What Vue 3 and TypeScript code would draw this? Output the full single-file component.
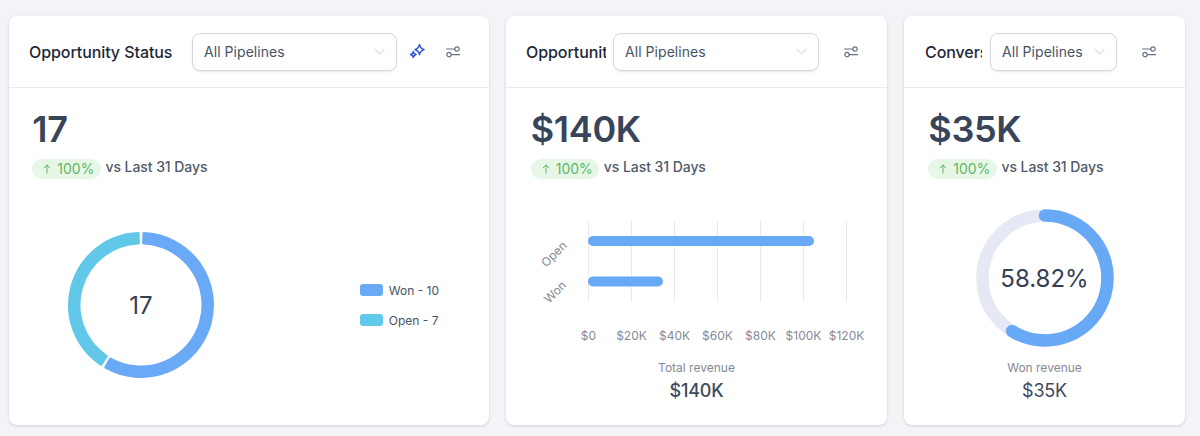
<template>
  <div class="dashboard">
    <section v-for="card in cards" :key="card.id" class="card" :class="card.id">
      <header class="card-header">
        <h3 class="card-title">{{ card.title }}</h3>
        <div class="select">
          <span>All Pipelines</span>
          <svg class="chevron" width="11" height="7" viewBox="0 0 11 7" fill="none">
            <path d="M.8 1.2 5.5 5.8l4.7-4.6" stroke="#c9cdd4" stroke-width="1" stroke-linecap="round" stroke-linejoin="round" />
          </svg>
        </div>
        <button v-if="card.id === 'status'" class="icon-btn sparkle">
          <svg width="18" height="18" viewBox="0 0 18 18" fill="none" stroke="#2f56d3" stroke-width="1.5" stroke-linejoin="round">
            <path d="M10.5 1.6c.6 2.9 1.5 3.9 4.6 5-3.1 1-4 2-4.6 5-.6-3-1.5-4-4.6-5 3.1-1.1 4-2.1 4.6-5Z" />
            <path d="M4.3 8.6c.3 1.7.9 2.3 2.7 2.9-1.8.6-2.4 1.2-2.7 2.9-.3-1.7-.9-2.3-2.7-2.9 1.8-.6 2.4-1.2 2.7-2.9Z" />
          </svg>
        </button>
        <button class="icon-btn">
          <svg width="16" height="14" viewBox="0 0 16 14" fill="none" stroke="#667085" stroke-width="1.2" stroke-linecap="round">
            <path d="M1.4 4h8.2" />
            <circle cx="12" cy="4" r="2.2" />
            <circle cx="4" cy="9.6" r="2.2" />
            <path d="M6.4 9.6h8.2" />
          </svg>
        </button>
      </header>

      <div class="card-body">
        <div class="metric">{{ card.metric }}</div>
        <div class="compare">
          <span class="badge">
            <svg width="8" height="10" viewBox="0 0 8 10" fill="none" stroke="#5cb866" stroke-width="1" stroke-linecap="round" stroke-linejoin="round">
              <path d="M4 9V1M1 4l3-3 3 3" />
            </svg>
            100%
          </span>
          <span class="compare-text">vs Last 31 Days</span>
        </div>

        <!-- donut + legend -->
        <div v-if="card.id === 'status'" class="status-chart">
          <div class="donut">
            <svg width="148" height="148" viewBox="0 0 148 148">
              <path v-for="s in donutSegments" :key="s.name" :d="s.path" :fill="s.color" :stroke="s.color" stroke-width="3" stroke-linejoin="round" />
            </svg>
            <span class="donut-label">17</span>
          </div>
          <ul class="legend">
            <li v-for="s in donutSegments" :key="s.name">
              <i class="swatch" :style="{ background: s.color }"></i>
              <span class="legend-text">{{ s.name }} - {{ s.value }}</span>
            </li>
          </ul>
        </div>

        <!-- horizontal bars -->
        <div v-else-if="card.id === 'value'" class="bar-chart">
          <svg width="381" height="140" viewBox="0 0 381 140">
            <line v-for="(t, i) in ticks" :key="i" :x1="tickX(i)" :x2="tickX(i)" y1="12" y2="93" stroke="#e7e9ee" stroke-width="1" />
            <rect v-for="b in bars" :key="b.name" x="82" :y="b.y" :width="b.width" height="10" rx="5" fill="#68a9f5" />
            <text v-for="b in bars" :key="b.name + 'l'" class="axis-text" text-anchor="middle" :transform="`translate(${b.lx} ${b.ly}) rotate(-45)`">{{ b.name }}</text>
            <text v-for="(t, i) in ticks" :key="t" class="axis-text" :x="tickX(i)" y="131" text-anchor="middle">{{ t }}</text>
          </svg>
        </div>

        <!-- conversion gauge -->
        <div v-else class="gauge">
          <svg width="138" height="138" viewBox="0 0 138 138" fill="none">
            <circle cx="69" cy="69" r="62.5" stroke="#e6e9f5" stroke-width="12.5" />
            <path :d="gaugePath" stroke="#68a9f5" stroke-width="12.5" stroke-linecap="round" />
          </svg>
          <span class="gauge-label">58.82%</span>
        </div>

        <div v-if="card.footLabel" class="foot">
          <div class="foot-label">{{ card.footLabel }}</div>
          <div class="foot-value">{{ card.metric }}</div>
        </div>
      </div>
    </section>
  </div>
</template>

<script setup lang="ts">
interface Card {
  id: string
  title: string
  metric: string
  footLabel?: string
}

const cards: Card[] = [
  { id: 'status', title: 'Opportunity Status', metric: '17' },
  { id: 'value', title: 'Opportunity Value', metric: '$140K', footLabel: 'Total revenue' },
  { id: 'conversion', title: 'Conversion', metric: '$35K', footLabel: 'Won revenue' }
]

const ticks = ['$0', '$20K', '$40K', '$60K', '$80K', '$100K', '$120K']
const tickX = (i: number): number => 82.5 + i * 43

const bars = [
  { name: 'Open', y: 27, width: 226, lx: 51, ly: 48 },
  { name: 'Won', y: 67.5, width: 75, lx: 52, ly: 86 }
]

const point = (r: number, deg: number, c: number): string => {
  const a = (deg * Math.PI) / 180
  return `${(c + r * Math.sin(a)).toFixed(2)} ${(c - r * Math.cos(a)).toFixed(2)}`
}

// ring slice, shrunk a bit since the stroke gives it the rounded corners
const slice = (from: number, to: number): string => {
  const outer = 71.5
  const inner = 62
  const large = to - from > 180 ? 1 : 0
  return `M${point(outer, from, 74)} A${outer} ${outer} 0 ${large} 1 ${point(outer, to, 74)} L${point(inner, to, 74)} A${inner} ${inner} 0 ${large} 0 ${point(inner, from, 74)} Z`
}

const donutSegments = [
  { name: 'Won', value: 10, color: '#6aa9f6', path: slice(2.4, 209.5) },
  { name: 'Open', value: 7, color: '#61c8ea', path: slice(214, 357.6) }
]

const gaugeEnd = (58.82 / 100) * 360
const gaugePath = `M${point(62.5, 0, 69)} A62.5 62.5 0 1 1 ${point(62.5, gaugeEnd, 69)}`
</script>

<style>
html,
body {
  background: #f2f4f8;
}
</style>

<style scoped>
.dashboard {
  display: flex;
  gap: 17px;
  height: 436px;
  padding: 16px 15px 11px 9px;
  box-sizing: border-box;
  background: #f2f4f8;
  font-family: Inter, "Liberation Sans", sans-serif;
  overflow: hidden;
}

.card {
  display: flex;
  flex-direction: column;
  flex: none;
  background: #fff;
  border-radius: 8px;
  box-shadow: 0 1px 3px rgba(16, 24, 40, 0.16);
}

.card.status {
  width: 480px;
}

.card.value {
  width: 381px;
}

.card.conversion {
  width: 281px;
}

.card-header {
  display: flex;
  align-items: center;
  height: 72px;
  padding: 0 20px;
  box-sizing: border-box;
  border-bottom: 1px solid #e9ebef;
}

.conversion .card-header {
  padding-left: 21px;
}

.card-title {
  flex: none;
  margin: 0;
  overflow: hidden;
  font-size: 16px;
  font-weight: 500;
  line-height: 24px;
  letter-spacing: -0.08px;
  color: #1d2939;
  white-space: nowrap;
}

.status .card-title {
  width: 143px;
  margin-right: 20px;
}

.value .card-title {
  width: 80px;
  margin-right: 7px;
}

.conversion .card-title {
  width: 57px;
  margin-right: 8px;
}

.select {
  display: flex;
  align-items: center;
  justify-content: space-between;
  flex: none;
  height: 38px;
  padding: 0 11px;
  box-sizing: border-box;
  border: 1px solid #d5d8de;
  border-radius: 8px;
  box-shadow: 0 1px 2px rgba(16, 24, 40, 0.1);
  font-size: 14px;
  letter-spacing: 0.05px;
  color: #475467;
}

.status .select {
  width: 205px;
}

.value .select {
  width: 206px;
}

.conversion .select {
  width: 127px;
}

.icon-btn {
  display: flex;
  align-items: center;
  justify-content: center;
  flex: none;
  width: 32px;
  height: 32px;
  margin-left: auto;
  padding: 0;
  border: 0;
  background: none;
}

.icon-btn.sparkle {
  margin-left: 5px;
  margin-right: 3px;
}

.sparkle + .icon-btn {
  margin-left: 0;
}

.card-body {
  display: flex;
  flex-direction: column;
  flex: 1;
  padding-top: 19px;
}

.metric,
.compare {
  padding-left: 24.3px;
}

.status .metric,
.status .compare {
  padding-left: 23.3px;
}

.value .metric,
.value .compare {
  padding-left: 24.7px;
}

.metric {
  font-size: 36px;
  font-weight: 600;
  line-height: 44px;
  letter-spacing: -0.3px;
  color: #38445a;
}

.compare {
  display: flex;
  align-items: center;
  gap: 4.6px;
  margin-top: 8px;
  font-size: 14px;
  line-height: 20px;
}

.badge {
  display: inline-flex;
  align-items: center;
  gap: 6px;
  width: 68.5px;
  height: 20px;
  padding-left: 11px;
  box-sizing: border-box;
  border-radius: 10px;
  background: #e7f7e7;
  color: #5cb866;
}

.compare-text {
  position: relative;
  top: -2px;
  font-weight: 500;
  letter-spacing: -0.06px;
  color: #4f5a6b;
}

.status-chart {
  display: flex;
  align-items: center;
  justify-content: space-between;
  margin-top: 52px;
  padding: 0 50px 0 58px;
}

.donut {
  display: flex;
  align-items: center;
  justify-content: center;
  position: relative;
  width: 148px;
  height: 148px;
}

.donut svg {
  display: block;
}

.donut-label {
  position: absolute;
  font-size: 24px;
  color: #344054;
}

.legend {
  display: flex;
  flex-direction: column;
  gap: 8px;
  margin: 0;
  padding: 0;
  list-style: none;
  font-size: 12px;
  line-height: 20px;
  color: #475467;
}

.legend li {
  display: flex;
  align-items: center;
  gap: 6px;
}

.legend-text {
  padding-top: 2px;
}

.swatch {
  width: 23px;
  height: 12px;
  border-radius: 3px;
}

.bar-chart {
  margin-top: 30px;
}

.bar-chart svg {
  display: block;
}

.axis-text {
  font-size: 12px;
  fill: #858a95;
}

.gauge {
  display: flex;
  align-items: center;
  justify-content: center;
  position: relative;
  margin-top: 30px;
}

.gauge svg {
  display: block;
}

.gauge-label {
  position: absolute;
  font-size: 24px;
  color: #344054;
}

.foot {
  margin-top: auto;
  padding-bottom: 21px;
  text-align: center;
}

.foot-label {
  font-size: 12px;
  line-height: 18px;
  color: #858a95;
}

.foot-value {
  margin-top: 1px;
  font-size: 18px;
  font-weight: 500;
  line-height: 26px;
  letter-spacing: -0.2px;
  color: #3f4a5e;
}

.conversion .foot-value {
  font-weight: 400;
}
</style>
